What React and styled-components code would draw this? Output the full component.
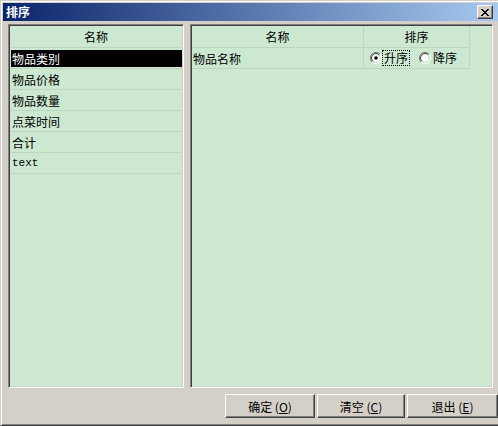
import React, { useState } from "react";
import styled, { createGlobalStyle } from "styled-components";

const GlobalStyle = createGlobalStyle`
  html, body {
    margin: 0;
    padding: 0;
    background: #d4d0c8;
  }
  body {
    font-family: "Noto Sans CJK SC", "Noto Sans", sans-serif;
    font-size: 12px;
  }
`;

const Window = styled.div`
  width: 498px;
  height: 426px;
  box-sizing: border-box;
  background: #d4d0c8;
  border-left: 1px solid #d4d0c8;
  border-top: 1px solid #d4d0c8;
  border-bottom: 1px solid #404040;
  box-shadow: inset 1px 1px 0 #ffffff, inset 0 -1px 0 #808080;
  padding: 2px 0 2px 2px;
  display: flex;
  flex-direction: column;
  overflow: hidden;
`;

const TitleBar = styled.div`
  height: 18px;
  display: flex;
  align-items: center;
  justify-content: space-between;
  padding: 0 5px 0 3px;
  background: linear-gradient(to right, #0a246a, #a6caf0);
`;

const TitleText = styled.div`
  color: #ffffff;
  font-weight: bold;
  font-size: 12px;
  line-height: 18px;
`;

const CloseButton = styled.div`
  width: 16px;
  height: 14px;
  box-sizing: border-box;
  background: #d4d0c8;
  border-top: 1px solid #ffffff;
  border-left: 1px solid #ffffff;
  border-right: 1px solid #404040;
  border-bottom: 1px solid #404040;
  box-shadow: inset -1px -1px 0 #808080;
  display: flex;
  align-items: center;
  justify-content: center;
`;

const Body = styled.div`
  display: flex;
  gap: 6px;
  padding: 3px 0 0 5px;
  height: 364px;
`;

const Panel = styled.div`
  width: ${(p) => p.$width}px;
  height: 100%;
  box-sizing: border-box;
  background: #cce8d0;
  border-top: 1px solid #808080;
  border-left: 1px solid #808080;
  border-right: 1px solid #ffffff;
  border-bottom: 1px solid #ffffff;
  box-shadow: inset 1px 1px 0 #404040, inset -1px -1px 0 #d4d0c8;
  padding: 1px;
  overflow: hidden;
`;

const Grid = styled.div`
  display: grid;
  grid-template-columns: ${(p) => p.$cols};
  width: ${(p) => p.$width};
`;

const HeaderCell = styled.div`
  height: 21px;
  line-height: 21px;
  text-align: center;
  color: #000;
  border-bottom: 1px solid #bcd6c0;
  border-right: ${(p) => (p.$divider ? "1px solid #bcd6c0" : "none")};
`;

const ListRow = styled.div`
  height: 18px;
  padding-top: 2px;
  border-bottom: 1px solid #bcd6c0;
`;

const RowLabel = styled.div`
  height: 17px;
  line-height: 17px;
  margin-left: 1px;
  padding-left: 1px;
  background: ${(p) => (p.$selected ? "#000000" : "transparent")};
  color: ${(p) => (p.$selected ? "#ffffff" : "#000000")};
  font-family: ${(p) =>
    p.$mono
      ? '"Liberation Mono", "DejaVu Sans Mono", monospace'
      : '"Noto Sans CJK SC", "Noto Sans", sans-serif'};
  font-size: ${(p) => (p.$mono ? "11px" : "12px")};
`;

const Cell = styled.div`
  height: 21px;
  border-bottom: 1px solid #bcd6c0;
  border-right: ${(p) => (p.$divider ? "1px solid #bcd6c0" : "none")};
  padding-left: ${(p) => p.$pad || 0}px;
  display: flex;
  align-items: center;
  box-sizing: border-box;
`;

const RadioOption = styled.label`
  display: flex;
  align-items: center;
  gap: 1px;
  margin-right: ${(p) => p.$gap || 0}px;
  cursor: default;
`;

const RadioText = styled.span`
  padding: 0 1px;
  line-height: 14px;
  outline: ${(p) => (p.$focus ? "1px dotted #000" : "none")};
`;

const Footer = styled.div`
  display: flex;
  justify-content: flex-end;
  gap: 2px;
  padding-top: 6px;
`;

const Button = styled.div`
  width: ${(p) => p.$width}px;
  height: 24px;
  box-sizing: border-box;
  background: #d4d0c8;
  border-top: 1px solid #ffffff;
  border-left: 1px solid #ffffff;
  border-right: 1px solid #404040;
  border-bottom: 1px solid #404040;
  box-shadow: inset -1px -1px 0 #808080;
  display: flex;
  align-items: center;
  justify-content: center;
  font-size: 12px;
  color: #000;
`;

function Radio({ checked }) {
  return (
    <svg width="12" height="12" viewBox="0 0 12 12">
      <path d="M10 2 A5.5 5.5 0 0 0 2 10" stroke="#808080" fill="none" />
      <path d="M9.2 2.8 A4.5 4.5 0 0 0 2.8 9.2" stroke="#404040" fill="none" />
      <path d="M2 10 A5.5 5.5 0 0 0 10 2" stroke="#ffffff" fill="none" />
      <circle cx="6" cy="6" r="3.6" fill="#ffffff" />
      {checked && <circle cx="6" cy="6" r="1.8" fill="#000000" />}
    </svg>
  );
}

const items = ["物品类别", "物品价格", "物品数量", "点菜时间", "合计", "text"];

export default function App() {
  const [order, setOrder] = useState("asc");
  return (
    <>
      <GlobalStyle />
      <Window>
        <TitleBar>
          <TitleText>排序</TitleText>
          <CloseButton>
            <svg width="8" height="7" viewBox="0 0 8 7">
              <path d="M0 0 L7 7 M1 0 L8 7 M7 0 L0 7 M8 0 L1 7" stroke="#000" strokeWidth="1" />
            </svg>
          </CloseButton>
        </TitleBar>
        <Body>
          <Panel $width={176}>
            <HeaderCell>名称</HeaderCell>
            {items.map((item, i) => (
              <ListRow key={item}>
                <RowLabel $selected={i === 0} $mono={item === "text"}>
                  {item}
                </RowLabel>
              </ListRow>
            ))}
          </Panel>
          <Panel $width={303}>
            <Grid $cols="172px 106px" $width="278px">
              <HeaderCell $divider>名称</HeaderCell>
              <HeaderCell $divider>排序</HeaderCell>
              <Cell $divider $pad={1}>物品名称</Cell>
              <Cell $divider $pad={6}>
                <RadioOption $gap={10} onClick={() => setOrder("asc")}>
                  <Radio checked={order === "asc"} />
                  <RadioText $focus={order === "asc"}>升序</RadioText>
                </RadioOption>
                <RadioOption onClick={() => setOrder("desc")}>
                  <Radio checked={order === "desc"} />
                  <RadioText $focus={order === "desc"}>降序</RadioText>
                </RadioOption>
              </Cell>
            </Grid>
          </Panel>
        </Body>
        <Footer>
          <Button $width={90}>
            确定 (<u>O</u>)
          </Button>
          <Button $width={88}>
            清空 (<u>C</u>)
          </Button>
          <Button $width={91}>
            退出 (<u>E</u>)
          </Button>
        </Footer>
      </Window>
    </>
  );
}
